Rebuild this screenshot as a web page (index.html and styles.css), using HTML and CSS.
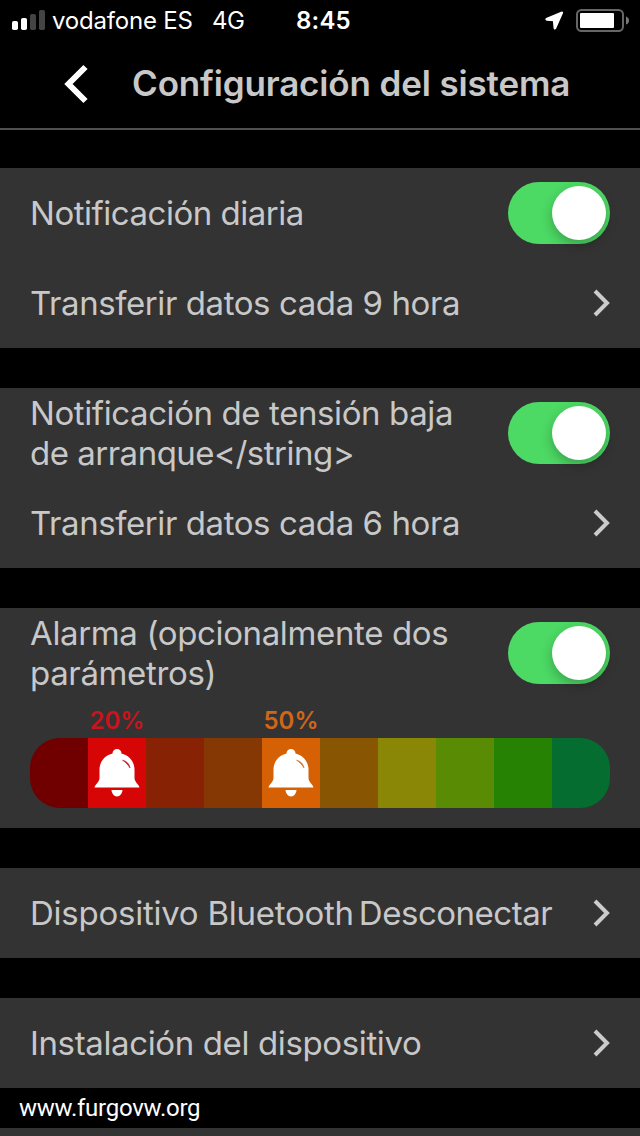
FILE: index.html
```
<!DOCTYPE html>
<html lang="es">
<head>
<meta charset="utf-8">
<title>Configuración del sistema</title>
<link rel="stylesheet" href="styles.css">
</head>
<body>
<div class="screen">
  <header class="status">
    <svg class="signal" width="34" height="20" viewBox="0 0 34 20"><rect x="0" y="11" width="6" height="9" rx="1.8" fill="#fff"/><rect x="9" y="8" width="6" height="12" rx="1.8" fill="#fff"/><rect x="18" y="4" width="6" height="16" rx="1.8" fill="#444"/><rect x="27" y="0" width="6" height="20" rx="1.8" fill="#444"/></svg>
    <span class="carrier">vodafone ES</span>
    <span class="network">4G</span>
    <span class="time">8:45</span>
    <svg class="location" width="20" height="20" viewBox="0 0 20 20"><path d="M18 1.2L2.4 7.8Q1.6 8.6 2.6 8.9L9.6 9.4L10.3 17Q10.6 18.3 11.5 17.2L18.4 1.8Z" fill="#fff" stroke="#fff" stroke-width="1.5" stroke-linejoin="round"/></svg>
    <svg class="battery" width="54" height="24" viewBox="0 0 54 24"><rect x="1" y="1" width="46" height="21" rx="4.500" fill="none" stroke="#666" stroke-width="2"/><rect x="4" y="4" width="34" height="15" rx="1" fill="#fff"/><path d="M50 7.500Q53 8.500 53 11.500T50 15.500Z" fill="#777"/></svg>
  </header>
  <nav class="titlebar">
    <svg class="back" width="24" height="40" viewBox="0 0 24 40"><path d="M21.500 3L4.500 20L21.500 37" fill="none" stroke="#fff" stroke-width="6"/></svg>
    <h1 class="title">Configuración del sistema</h1>
  </nav>
  <main class="groups">
    <section class="group">
      <div class="row"><span class="label l-daily">Notificación diaria</span><span class="switch"><span class="knob"></span></span></div>
      <div class="row"><span class="label l-transfer">Transferir datos cada 9 hora</span><svg class="chevron" width="18" height="28" viewBox="0 0 18 28"><path d="M3 2L15 14L3 26" fill="none" stroke="#ccc" stroke-width="4"/></svg></div>
    </section>
    <section class="group">
      <div class="row"><span class="label l-voltage">Notificación de tensión baja<br><span class="l-start">de arranque&lt;/string&gt;</span></span><span class="switch"><span class="knob"></span></span></div>
      <div class="row"><span class="label l-transfer">Transferir datos cada 6 hora</span><svg class="chevron" width="18" height="28" viewBox="0 0 18 28"><path d="M3 2L15 14L3 26" fill="none" stroke="#ccc" stroke-width="4"/></svg></div>
    </section>
    <section class="group">
      <div class="row"><span class="label l-alarm">Alarma (opcionalmente dos<br>parámetros)</span><span class="switch"><span class="knob"></span></span></div>
      <div class="levels">
        <div class="marks"><span class="mark low">20%</span><span class="mark mid">50%</span></div>
        <div class="bar">
          <span class="cell c1"></span>
          <span class="cell c2"><svg width="46" height="48" viewBox="0 0 46 48"><path d="M18.500 4.500A4.500 4.500 0 0 1 27.500 4.500C35 6.500 40 12 40.500 20V29C40.500 33 45 35.500 45.500 38.500H.5C1 35.500 5.500 33 5.500 29V20C6 12 11 6.500 18.500 4.500ZM17.500 41H28.500A5.500 6.500 0 0 1 17.500 41Z" fill="#fff"/><path d="M28.500 11.200C32.500 12 35.500 15 36 19C33.500 15 31.500 13 28.500 11.200Z" fill="#c01020" stroke="#c01020" stroke-width=".6"/></svg></span>
          <span class="cell c3"></span>
          <span class="cell c4"></span>
          <span class="cell c5"><svg width="46" height="48" viewBox="0 0 46 48"><path d="M18.500 4.500A4.500 4.500 0 0 1 27.500 4.500C35 6.500 40 12 40.500 20V29C40.500 33 45 35.500 45.500 38.500H.5C1 35.500 5.500 33 5.500 29V20C6 12 11 6.500 18.500 4.500ZM17.500 41H28.500A5.500 6.500 0 0 1 17.500 41Z" fill="#fff"/><path d="M28.500 11.200C32.500 12 35.500 15 36 19C33.500 15 31.500 13 28.500 11.200Z" fill="#d07020" stroke="#d07020" stroke-width=".6"/></svg></span>
          <span class="cell c6"></span>
          <span class="cell c7"></span>
          <span class="cell c8"></span>
          <span class="cell c9"></span>
          <span class="cell c10"></span>
        </div>
      </div>
    </section>
    <section class="group">
      <div class="row"><span class="label l-device">Dispositivo Bluetooth</span><span class="value">Desconectar</span><svg class="chevron" width="18" height="28" viewBox="0 0 18 28"><path d="M3 2L15 14L3 26" fill="none" stroke="#ccc" stroke-width="4"/></svg></div>
    </section>
    <section class="group">
      <div class="row"><span class="label l-install">Instalación del dispositivo</span><svg class="chevron" width="18" height="28" viewBox="0 0 18 28"><path d="M3 2L15 14L3 26" fill="none" stroke="#ccc" stroke-width="4"/></svg></div>
    </section>
  </main>
  <footer class="watermark"><span class="url">www.furgovw.org</span></footer>
  <div class="next"></div>
</div>
</body>
</html>
```
FILE: styles.css
```
* { box-sizing: border-box; }
body { margin: 0; background: #000; color: #c8c8c8; font-family: Inter, Roboto, sans-serif; }
svg { display: block; flex: none; }
.screen { width: 640px; height: 1136px; display: flex; flex-direction: column; overflow: hidden; }
.status { height: 40px; display: flex; align-items: center; padding: 0 10px 0 12px; color: #fff; font-size: 24px; white-space: nowrap; }
.carrier { width: 160px; margin-left: 6px; padding-top: 1px; letter-spacing: -.2px; }
.network { width: 84px; padding-top: 1px; letter-spacing: -.5px; }
.time { width: 248px; padding-top: 1px; font-weight: 600; letter-spacing: .2px; }
.location { margin-top: 1px; }
.battery { margin-left: 12px; margin-top: 1px; }
.titlebar { height: 90px; border-bottom: 2px solid #505050; display: flex; align-items: center; padding-left: 64px; }
.title { margin: 0 0 3px 44px; font-size: 35px; font-weight: 600; letter-spacing: -.15px; white-space: nowrap; }
.groups { display: flex; flex-direction: column; gap: 40px; padding-top: 38px; }
.group { background: #333; }
.row { height: 90px; display: flex; align-items: center; padding: 0 30px; }
.label, .value { font-size: 33px; line-height: 40px; white-space: nowrap; }
.l-daily { letter-spacing: -.48px; }
.l-transfer { letter-spacing: -.42px; }
.l-voltage { letter-spacing: -.4px; }
.l-start { letter-spacing: -.5px; }
.l-alarm { letter-spacing: -.36px; }
.l-device { letter-spacing: -.25px; }
.l-install { letter-spacing: -.37px; }
.value { margin-left: 5px; letter-spacing: -.48px; }
.chevron { margin-left: auto; }
.switch { width: 102px; height: 62px; margin-left: auto; border-radius: 31px; background: #4cd964; display: flex; align-items: center; justify-content: flex-end; padding: 4px; }
.knob { width: 54px; height: 54px; border-radius: 50%; background: #fff; box-shadow: 0 5px 12px rgba(0,0,0,.25); }
.levels { height: 130px; padding: 8px 30px 0; }
.marks { display: grid; grid-template-columns: repeat(10, 58px); height: 32px; }
.mark { padding-top: 1px; font-size: 24px; line-height: 28px; font-weight: 600; text-align: center; }
.low { grid-column: 2; color: #c8141c; }
.mid { grid-column: 5; color: #d0661a; }
.bar { height: 70px; display: grid; grid-template-columns: repeat(10, 58px); border-radius: 30px; overflow: hidden; }
.cell { display: flex; align-items: center; justify-content: center; }
.c1 { background: #700000; }
.c2 { background: #d60606; }
.c3 { background: #882205; }
.c4 { background: #853803; }
.c5 { background: #d66004; }
.c6 { background: #885603; }
.c7 { background: #8a8706; }
.c8 { background: #598b04; }
.c9 { background: #268203; }
.c10 { background: #066d30; }
.watermark { height: 40px; padding-left: 19px; color: #fff; display: flex; align-items: center; }
.url { font-family: Roboto, sans-serif; font-size: 24px; letter-spacing: -.25px; }
.next { flex: 1; background: #333; }
```
